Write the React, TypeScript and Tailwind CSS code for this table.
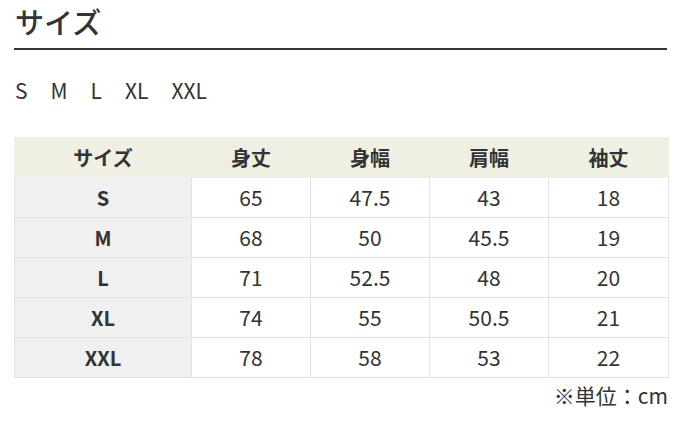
const headers = ['サイズ', '身丈', '身幅', '肩幅', '袖丈'];

const rows = [
  ['S', '65', '47.5', '43', '18'],
  ['M', '68', '50', '45.5', '19'],
  ['L', '71', '52.5', '48', '20'],
  ['XL', '74', '55', '50.5', '21'],
  ['XXL', '78', '58', '53', '22'],
];

const App = () => {
  return (
    <div
      className="w-[681px] h-[424px] bg-white px-[14px] text-[#333]"
      style={{fontFamily: '"Noto Sans CJK JP", "Noto Sans", sans-serif'}}
    >
      <h2 className="border-b-2 border-[#333] pb-[6px] pl-[1px] text-[29px] font-medium leading-[42px] text-[#333]">
        サイズ
      </h2>

      <div className="mt-[26px] flex gap-[23px] pl-[1px] text-[21px] leading-[28px] text-[#333]">
        <span>S</span>
        <span>M</span>
        <span>L</span>
        <span>XL</span>
        <span>XXL</span>
      </div>

      <table className="mt-[33px] w-[654px] table-fixed border-collapse text-center">
        <colgroup>
          <col className="w-[177px]" />
          <col className="w-[119px]" />
          <col className="w-[119px]" />
          <col className="w-[119px]" />
          <col className="w-[120px]" />
        </colgroup>
        <thead>
          <tr className="h-[40px] bg-[#efefe3]">
            {headers.map(h => (
              <th key={h} className="border border-[#efefe3] text-[20px] font-bold">
                {h}
              </th>
            ))}
          </tr>
        </thead>
        <tbody>
          {rows.map(row => (
            <tr key={row[0]} className="h-[40px]">
              {row.map((cell, i) =>
                i === 0 ? (
                  <td
                    key={i}
                    className="border border-[#e2e2e2] bg-[#f0f0f0] text-[20px] font-bold"
                  >
                    {cell}
                  </td>
                ) : (
                  <td key={i} className="border border-[#e2e2e2] text-[21px]">
                    {cell}
                  </td>
                ),
              )}
            </tr>
          ))}
        </tbody>
      </table>

      <p className="mt-[2px] w-[654px] text-right text-[21px] leading-[30px] text-[#333]">
        ※単位：cm
      </p>
    </div>
  );
};

export default App;
